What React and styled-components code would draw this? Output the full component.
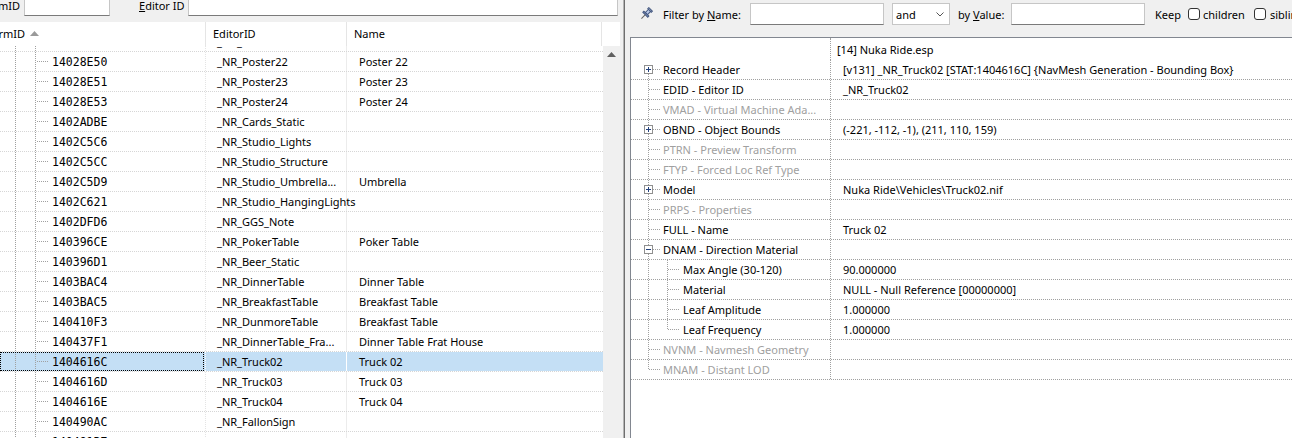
import styled, { createGlobalStyle, css } from "styled-components";

const GlobalStyle = createGlobalStyle`
  html, body { margin: 0; padding: 0; overflow: hidden; }
  body {
    background: #f0f0f0;
    font-family: "Noto Sans", "Open Sans", "Liberation Sans", sans-serif;
    font-size: 11px;
    color: #000;
  }
`;

const leftRows = [
  ["14028E4F", "_NR_Poster21", "Poster 21"],
  ["14028E50", "_NR_Poster22", "Poster 22"],
  ["14028E51", "_NR_Poster23", "Poster 23"],
  ["14028E53", "_NR_Poster24", "Poster 24"],
  ["1402ADBE", "_NR_Cards_Static", ""],
  ["1402C5C6", "_NR_Studio_Lights", ""],
  ["1402C5CC", "_NR_Studio_Structure", ""],
  ["1402C5D9", "_NR_Studio_Umbrella...", "Umbrella"],
  ["1402C621", "_NR_Studio_HangingLights", ""],
  ["1402DFD6", "_NR_GGS_Note", ""],
  ["140396CE", "_NR_PokerTable", "Poker Table"],
  ["140396D1", "_NR_Beer_Static", ""],
  ["1403BAC4", "_NR_DinnerTable", "Dinner Table"],
  ["1403BAC5", "_NR_BreakfastTable", "Breakfast Table"],
  ["140410F3", "_NR_DunmoreTable", "Breakfast Table"],
  ["140437F1", "_NR_DinnerTable_Fra...", "Dinner Table Frat House"],
  ["1404616C", "_NR_Truck02", "Truck 02"],
  ["1404616D", "_NR_Truck03", "Truck 03"],
  ["1404616E", "_NR_Truck04", "Truck 04"],
  ["140490AC", "_NR_FallonSign", ""],
  ["140491B7", "_NR_Amusement_Pier", "Pier"],
];
const selectedId = "1404616C";

const fields = [
  { name: "Record Header", value: "[v131] _NR_Truck02 [STAT:1404616C] {NavMesh Generation - Bounding Box}", exp: "plus", first: true },
  { name: "EDID - Editor ID", value: "_NR_Truck02" },
  { name: "VMAD - Virtual Machine Ada...", dim: true },
  { name: "OBND - Object Bounds", value: "(-221, -112, -1), (211, 110, 159)", exp: "plus" },
  { name: "PTRN - Preview Transform", dim: true },
  { name: "FTYP - Forced Loc Ref Type", dim: true },
  { name: "Model", value: "Nuka Ride\\Vehicles\\Truck02.nif", exp: "plus" },
  { name: "PRPS - Properties", dim: true },
  { name: "FULL - Name", value: "Truck 02" },
  { name: "DNAM - Direction Material", exp: "minus" },
  { name: "Max Angle (30-120)", value: "90.000000", level: 1 },
  { name: "Material", value: "NULL - Null Reference [00000000]", level: 1 },
  { name: "Leaf Amplitude", value: "1.000000", level: 1 },
  { name: "Leaf Frequency", value: "1.000000", level: 1, lastChild: true },
  { name: "NVNM - Navmesh Geometry", dim: true },
  { name: "MNAM - Distant LOD", dim: true, last: true },
];

const Window = styled.div`
  display: flex;
  width: 1292px;
  height: 438px;
  overflow: hidden;
  background: #f0f0f0;
`;

/* ---------- left pane ---------- */

const LeftPane = styled.section`
  width: 620px;
  flex: none;
  display: flex;
  flex-direction: column;
  overflow: hidden;
`;

const FilterStrip = styled.div`
  height: 22px;
  flex: none;
  overflow: hidden;
`;

const FilterRow = styled.div`
  display: flex;
  align-items: center;
  height: 22px;
  margin-top: ${p => p.$shift || 0}px;
  padding-left: ${p => p.$pad || 0}px;
`;

const ClipLabel = styled.span`
  width: ${p => p.$w}px;
  flex: none;
  display: flex;
  justify-content: flex-end;
  overflow: hidden;
  white-space: nowrap;
`;

const Label = styled.span`
  flex: none;
  width: ${p => (p.$w ? `${p.$w}px` : "auto")};
  margin-left: ${p => p.$ml || 0}px;
  white-space: nowrap;
  u { text-decoration: underline; text-underline-offset: 1px; }
`;

const TextBox = styled.div`
  flex: none;
  box-sizing: border-box;
  width: ${p => p.$w}px;
  height: 22px;
  margin-left: ${p => p.$ml || 0}px;
  background: #fff;
  border: 1px solid #c6c6c6;
  border-bottom-color: #7a7a7a;
`;

const ListHeader = styled.div`
  height: 24px;
  flex: none;
  display: grid;
  grid-template-columns: 206px 141px 255px 18px;
  background: #fff;
`;

const HeadCell = styled.div`
  display: flex;
  align-items: center;
  gap: 5px;
  padding-left: ${p => p.$pad || 0}px;
  padding-bottom: 1px;
  border-right: ${p => (p.$last ? "none" : "1px solid #e5e5e5")};
  white-space: nowrap;
`;

const ListBody = styled.div`
  flex: 1;
  display: flex;
  min-height: 0;
`;

const List = styled.div`
  width: 603px;
  flex: none;
  background: #fff;
  overflow: hidden;
`;

const ListInner = styled.div`
  margin-top: -14px;
`;

const Row = styled.div`
  display: grid;
  grid-template-columns: 206px 141px 256px;
  height: 20px;
  box-sizing: border-box;
  border-bottom: 1px dotted #d6d6d6;
`;

const cellBase = css`
  display: flex;
  align-items: center;
  min-width: 0;
  white-space: nowrap;
  background: ${p => (p.$sel ? "#c4dff5" : "transparent")};
`;

const FormCell = styled.div`
  ${cellBase};
  position: relative;
  border-right: 1px dotted ${p => (p.$sel ? "#fff" : "#e4e4e4")};
  font-family: "DejaVu Sans Mono", "Liberation Mono", monospace;
  font-size: 11.5px;
  ${p => p.$sel && css`
    &::after {
      content: "";
      position: absolute;
      inset: 0 1px 0 0;
      border: 1px dotted #000;
    }
  `}
`;

const TextCell = styled.div`
  ${cellBase};
  padding-left: ${p => p.$pad}px;
  border-right: ${p => (p.$edge ? `1px solid ${p.$sel ? "#fff" : "#ececec"}` : "none")};
  position: relative;
  z-index: ${p => (p.$spill ? 1 : 0)};
  overflow: ${p => (p.$spill ? "visible" : "hidden")};
`;

const ScrollBar = styled.div`
  width: 17px;
  flex: none;
  background: #f0f0f0;
  display: flex;
  justify-content: center;
  padding-top: 6px;
  box-sizing: border-box;
`;

const Splitter = styled.div`
  width: 6px;
  flex: none;
  background: linear-gradient(to right, #f0f0f0 0 3px, #b4b4b4 3px 4px, #6e6e6e 4px 5px, #f0f0f0 5px);
`;

/* ---------- right pane ---------- */

const RightPane = styled.section`
  flex: 1;
  display: flex;
  flex-direction: column;
  min-width: 0;
  overflow: hidden;
`;

const FilterBar = styled.div`
  height: 37px;
  flex: none;
  box-sizing: border-box;
  padding-top: 3px;
`;

const Select = styled.div`
  flex: none;
  box-sizing: border-box;
  width: 58px;
  height: 22px;
  margin-left: 8px;
  background: #fff;
  border: 1px solid #c6c6c6;
  display: flex;
  align-items: center;
  justify-content: space-between;
  padding: 0 5px 0 3px;
`;

const Check = styled.span`
  flex: none;
  width: 12px;
  height: 12px;
  box-sizing: border-box;
  border: 1px solid #333;
  border-radius: 3px;
  background: #fff;
  margin-left: ${p => p.$ml || 0}px;
  margin-right: ${p => p.$mr || 0}px;
`;

const TreeBox = styled.div`
  flex: 1;
  margin-left: 4px;
  background: #fff;
  border-left: 1px solid #828790;
  border-top: 1px solid #828790;
`;

const FieldRow = styled.div`
  display: grid;
  grid-template-columns: 200px 1fr;
  height: ${p => (p.$head ? 22 : 20)}px;
  box-sizing: border-box;
  border-bottom: ${p => (p.$head ? "none" : "1px dotted #a0a0a0")};
`;

const NameCell = styled.div`
  display: flex;
  align-items: center;
  white-space: nowrap;
  overflow: hidden;
  border-right: 1px dotted #a0a0a0;
  color: ${p => (p.$dim ? "#a0a0a0" : "#000")};
`;

const ValueCell = styled.div`
  display: flex;
  align-items: center;
  white-space: nowrap;
  overflow: hidden;
  padding-left: ${p => (p.$head ? 6 : 12)}px;
`;

const Glyph = styled.svg`
  flex: none;
  display: block;
`;

const Dots = ({ x1, y1, x2, y2 }) => (
  <line x1={x1} y1={y1} x2={x2} y2={y2} stroke="#a0a0a0" strokeWidth="1"
    strokeDasharray="1 1" shapeRendering="crispEdges" />
);

const ListGuides = () => (
  <Glyph width="52" height="19">
    <Dots x1={15.5} y1={0} x2={15.5} y2={19} />
    <Dots x1={35.5} y1={0} x2={35.5} y2={19} />
    <Dots x1={37} y1={9.5} x2={49} y2={9.5} />
  </Glyph>
);

const FieldGuides = ({ level = 0, exp, first, last, lastChild }) => (
  <Glyph width={level ? 52 : 32} height="19">
    <Dots x1={17.5} y1={first ? 14 : 0} x2={17.5} y2={last ? 10 : 19} />
    {level === 1 ? (
      <>
        <Dots x1={36.5} y1={0} x2={36.5} y2={lastChild ? 10 : 19} />
        <Dots x1={37} y1={9.5} x2={49} y2={9.5} />
      </>
    ) : (
      <Dots x1={exp ? 22 : 18} y1={9.5} x2={29} y2={9.5} />
    )}
    {exp && (
      <g>
        <rect x="13.5" y="5.5" width="8" height="8" fill="#fff" stroke="#8f8f8f" />
        <rect x="15" y="9" width="5" height="1" fill="#22407c" />
        {exp === "plus" && <rect x="17" y="7" width="1" height="5" fill="#22407c" />}
      </g>
    )}
  </Glyph>
);

const SortArrow = () => (
  <Glyph width="9" height="5" viewBox="0 0 9 5"><path d="M0 5 L4.5 0 L9 5 Z" fill="#9a9a9a" /></Glyph>
);

const UpArrow = () => (
  <Glyph width="9" height="5" viewBox="0 0 9 5"><path d="M0 5 L4.5 0 L9 5 Z" fill="#606060" /></Glyph>
);

const Chevron = () => (
  <Glyph width="8" height="5" viewBox="0 0 8 5">
    <path d="M0.5 0.5 L4 4 L7.5 0.5" fill="none" stroke="#555" strokeWidth="1" />
  </Glyph>
);

const Pin = () => (
  <Glyph width="14" height="14" viewBox="0 0 14 14">
    <g transform="rotate(45 7 7)" stroke="#44587f" strokeWidth="1" fill="#b9c8e8">
      <rect x="4.5" y="0.5" width="5" height="1.5" />
      <rect x="5.5" y="2" width="3" height="4.5" />
      <rect x="3.5" y="6.5" width="7" height="1.5" fill="#7e94c4" />
      <line x1="7" y1="8" x2="7" y2="13.5" stroke="#666" />
    </g>
  </Glyph>
);

export default function App() {
  return (
    <>
      <GlobalStyle />
      <Window>
        <LeftPane>
          <FilterStrip>
            <FilterRow $shift={-6}>
              <ClipLabel $w={20}>FormID</ClipLabel>
              <TextBox $w={86} $ml={4} />
              <Label $ml={29} $w={49}><u>E</u>ditor ID</Label>
              <TextBox $w={430} />
            </FilterRow>
          </FilterStrip>

          <ListHeader>
            <HeadCell>
              <ClipLabel $w={25}>FormID</ClipLabel>
              <SortArrow />
            </HeadCell>
            <HeadCell $pad={7}>EditorID</HeadCell>
            <HeadCell $pad={7}>Name</HeadCell>
            <HeadCell $last />
          </ListHeader>

          <ListBody>
            <List>
              <ListInner>
                {leftRows.map(([id, edid, name]) => {
                  const sel = id === selectedId;
                  return (
                    <Row key={id}>
                      <FormCell $sel={sel}>
                        <ListGuides />
                        {id}
                      </FormCell>
                      <TextCell $sel={sel} $pad={11} $edge $spill={!name}>{edid}</TextCell>
                      <TextCell $sel={sel} $pad={12}>{name}</TextCell>
                    </Row>
                  );
                })}
              </ListInner>
            </List>
            <ScrollBar><UpArrow /></ScrollBar>
          </ListBody>
        </LeftPane>

        <Splitter />

        <RightPane>
          <FilterBar>
            <FilterRow $pad={13}>
              <Pin />
              <Label $ml={10} $w={87}>Filter by <u>N</u>ame:</Label>
              <TextBox $w={134} />
              <Select>and<Chevron /></Select>
              <Label $ml={8} $w={53}>by <u>V</u>alue:</Label>
              <TextBox $w={134} />
              <Label $ml={10} $w={33}>Keep</Label>
              <Check $mr={3} />
              <Label $w={51}>children</Label>
              <Check $mr={4} />
              <Label>siblings</Label>
            </FilterRow>
          </FilterBar>

          <TreeBox>
            <FieldRow $head>
              <NameCell />
              <ValueCell $head>[14] Nuka Ride.esp</ValueCell>
            </FieldRow>
            {fields.map(f => (
              <FieldRow key={f.name}>
                <NameCell $dim={f.dim}>
                  <FieldGuides level={f.level || 0} exp={f.exp} first={f.first} last={f.last} lastChild={f.lastChild} />
                  {f.name}
                </NameCell>
                <ValueCell>{f.value}</ValueCell>
              </FieldRow>
            ))}
          </TreeBox>
        </RightPane>
      </Window>
    </>
  );
}
